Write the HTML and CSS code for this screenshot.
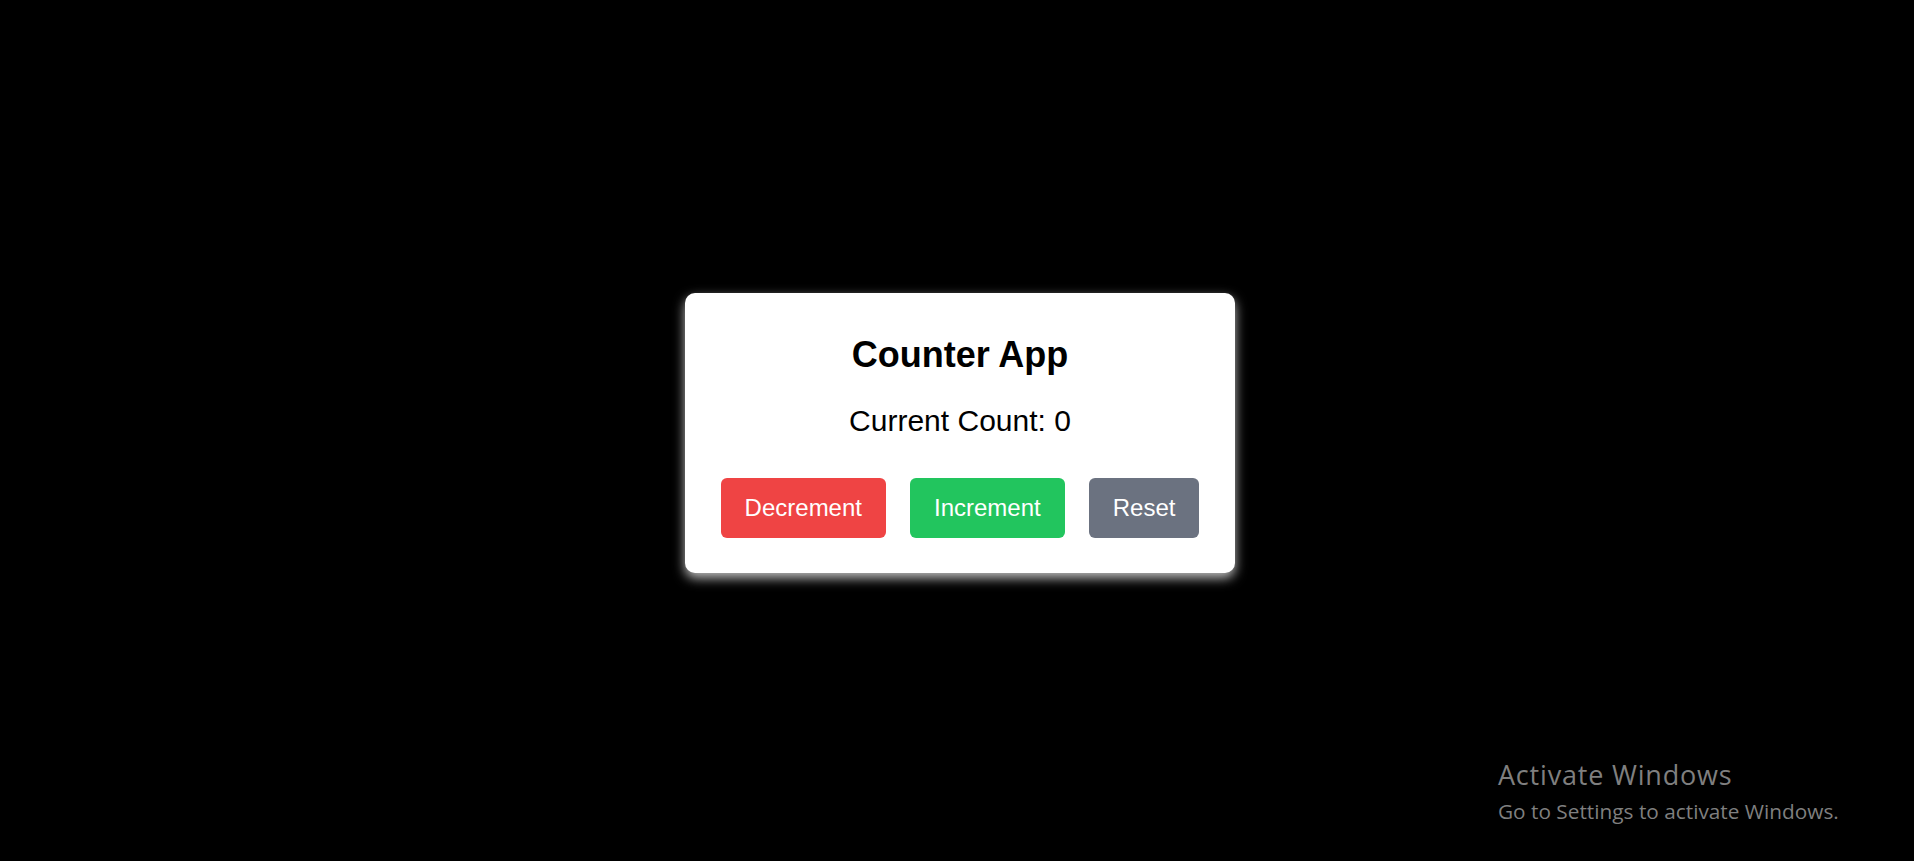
FILE: index.html
```html
<!DOCTYPE html>
<html lang="en">
<head>
<meta charset="utf-8">
<title>Counter App</title>
<link rel="stylesheet" href="styles.css">
</head>
<body>
  <main class="stage">
    <section class="card">
      <h1 class="title">Counter App</h1>
      <p class="count">Current Count: 0</p>
      <div class="actions">
        <button class="btn btn-dec" type="button">Decrement</button>
        <button class="btn btn-inc" type="button">Increment</button>
        <button class="btn btn-reset" type="button">Reset</button>
      </div>
    </section>
  </main>
  <div class="watermark">
    <div class="wm-title">Activate Windows</div>
    <div class="wm-sub">Go to Settings to activate Windows.</div>
  </div>
</body>
</html>
```
FILE: styles.css
```css
html, body {
  margin: 0;
  padding: 0;
  height: 100%;
  background: #000;
}

body {
  font-family: "Liberation Sans", Arial, sans-serif;
  overflow: hidden;
}

.stage {
  height: 100%;
  box-sizing: border-box;
  padding: 5px 0 0 6px;
  display: flex;
  align-items: center;
  justify-content: center;
}

.card {
  width: 550px;
  box-sizing: border-box;
  background: #fff;
  border-radius: 10px;
  padding: 41px 36px 35px;
  text-align: center;
  box-shadow: 0 5px 12px rgba(255, 255, 255, 0.75);
}

.title {
  margin: 0 0 29px;
  font-size: 36px;
  font-weight: 700;
  line-height: 41px;
  color: #000;
}

.count {
  margin: 0 0 40px;
  font-size: 30px;
  line-height: 34px;
  color: #000;
}

.actions {
  display: flex;
  justify-content: center;
  gap: 24px;
}

.btn {
  font-family: "Liberation Sans", Arial, sans-serif;
  font-size: 24px;
  line-height: 28px;
  padding: 16px 24px;
  border: 0;
  border-radius: 6px;
  color: #fff;
  cursor: pointer;
}

.btn-dec { background: #ef4444; }
.btn-inc { background: #22c55e; }
.btn-reset { background: #6b7280; }

.watermark {
  position: absolute;
  left: 1498px;
  top: 757px;
  color: #7f7f7f;
  font-family: "Open Sans", "Noto Sans", sans-serif;
}

.wm-title {
  font-size: 27px;
  line-height: 36px;
  letter-spacing: 0.8px;
}

.wm-sub {
  font-size: 20.8px;
  line-height: 36px;
}
```
